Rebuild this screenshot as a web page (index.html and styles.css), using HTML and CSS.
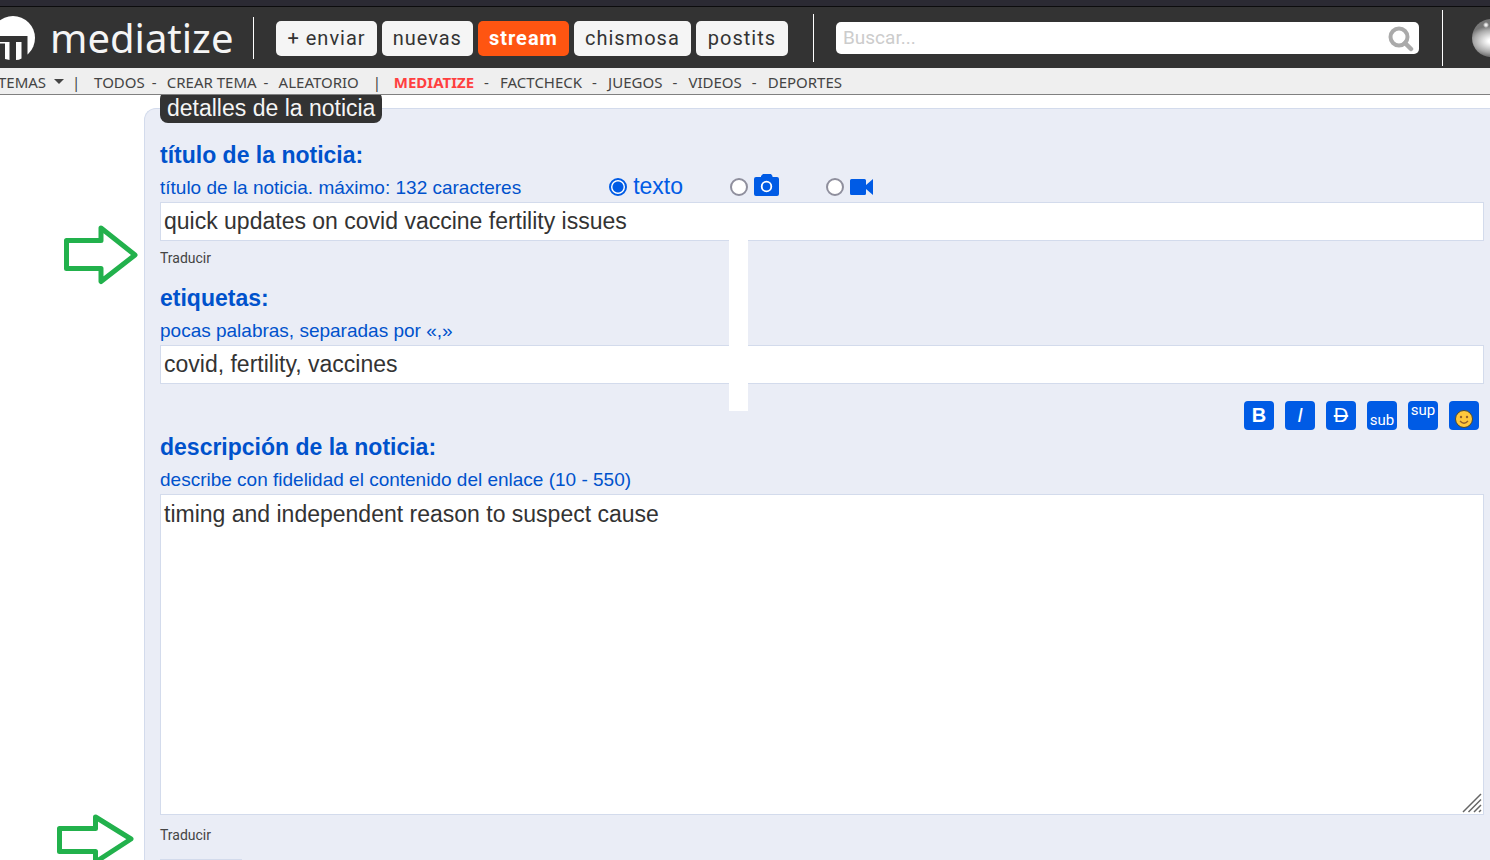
FILE: index.html
```html
<!DOCTYPE html>
<html lang="es">
<head>
<meta charset="utf-8">
<title>mediatize</title>
<link rel="stylesheet" href="styles.css">
</head>
<body>
<header class="site-header">
  <div class="topbar">
    <a class="brand" href="#">
      <svg class="brand-logo" width="35" height="46" viewBox="0 0 35 46" aria-hidden="true">
        <circle cx="13" cy="22" r="22" fill="#fff"/>
        <path d="M0 20H27.500V46H0z" fill="#333"/>
        <path d="M0 26H9.500V44L5 43V27.500H0zM16 26H21.500V42.500Q19 44 16 44z" fill="#fff"/>
      </svg>
      <span class="brand-name">mediatize</span>
    </a>
    <nav class="main-nav">
      <a class="tab" href="#">+ enviar</a>
      <a class="tab" href="#">nuevas</a>
      <a class="tab tab-active" href="#">stream</a>
      <a class="tab" href="#">chismosa</a>
      <a class="tab" href="#">postits</a>
    </nav>
    <form class="search">
      <input class="search-input" type="search" placeholder="Buscar..." aria-label="Buscar">
      <button class="search-button" type="button" aria-label="Buscar">
        <svg width="26" height="26" viewBox="0 0 26 26" fill="none" stroke="#aaa"><circle cx="11" cy="11" r="8.500" stroke-width="4"/><path d="M17 17L23 23" stroke-width="4.500" stroke-linecap="round"/></svg>
      </button>
    </form>
    <a class="profile" href="#" aria-label="Perfil"><span class="avatar"></span></a>
  </div>
  <nav class="topics">
    <a class="temas" href="#">TEMAS</a><span class="caret"></span><span class="bar">|</span>
    <a href="#">TODOS</a><span class="dash">-</span>
    <a href="#">CREAR TEMA</a><span class="dash">-</span>
    <a href="#">ALEATORIO</a><span class="bar">|</span>
    <a class="current" href="#">MEDIATIZE</a><span class="dash">-</span>
    <a href="#">FACTCHECK</a><span class="dash">-</span>
    <a href="#">JUEGOS</a><span class="dash">-</span>
    <a href="#">VIDEOS</a><span class="dash">-</span>
    <a href="#">DEPORTES</a>
  </nav>
</header>
<main class="page">
  <form class="panel">
    <h1 class="legend">detalles de la noticia</h1>
    <section class="field">
      <label class="title" for="titulo">título de la noticia:</label>
      <div class="hint-row">
        <p class="hint">título de la noticia. máximo: 132 caracteres</p>
        <div class="kinds">
          <label class="kind"><input class="radio" type="radio" name="kind" checked><span>texto</span></label>
          <label class="kind"><input class="radio" type="radio" name="kind" aria-label="imagen">
            <svg class="camera" width="25" height="22" viewBox="0 0 25 22" aria-hidden="true"><path d="M2 3H7V2L9 0H17L18.500 2V3H23Q25 3 25 5V20Q25 22 23 22H2Q0 22 0 20V5Q0 3 2 3z" fill="#005be5"/><circle cx="12.500" cy="12.500" r="4.800" fill="none" stroke="#fff" stroke-width="1.800"/></svg>
          </label>
          <label class="kind"><input class="radio" type="radio" name="kind" aria-label="video">
            <svg width="23" height="16" viewBox="0 0 23 16" aria-hidden="true"><path d="M1.500 0H14.500Q16 0 16 1.500V6L23 0V16L16 10V14.500Q16 16 14.500 16H1.500Q0 16 0 14.500V1.500Q0 0 1.500 0z" fill="#005be5"/></svg>
          </label>
        </div>
      </div>
      <input class="text" id="titulo" type="text" value="quick updates on covid vaccine fertility issues">
      <a class="translate" href="#">Traducir</a>
      <svg class="arrow arrow-top" width="74" height="60" viewBox="0 0 74 60" aria-hidden="true"><path d="M2.500 15.500H37V3L71 30L37 56.500V43.500H2.500z"/></svg>
    </section>
    <section class="field tags">
      <label class="title" for="etiquetas">etiquetas:</label>
      <p class="hint">pocas palabras, separadas por «,»</p>
      <input class="text" id="etiquetas" type="text" value="covid, fertility, vaccines">
      <span class="cover"></span>
    </section>
    <section class="field">
      <div class="tools">
        <button class="tool" type="button"><b>B</b></button>
        <button class="tool" type="button"><i>I</i></button>
        <button class="tool" type="button"><s>D</s></button>
        <button class="tool tool-sub" type="button">sub</button>
        <button class="tool tool-sup" type="button">sup</button>
        <button class="tool tool-face" type="button" aria-label="emoji">
          <svg width="18" height="18" viewBox="0 0 18 18"><circle cx="9" cy="9" r="8.500" fill="#ffc83d" stroke="#4e4930"/><circle cx="6" cy="7" r="1.200" fill="#96602a"/><circle cx="12" cy="7" r="1.200" fill="#96602a"/><path d="M5 11Q9 15.500 13 11" fill="none" stroke="#96602a" stroke-width="1.300"/></svg>
        </button>
      </div>
      <label class="title" for="descripcion">descripción de la noticia:</label>
      <p class="hint">describe con fidelidad el contenido del enlace (10 - 550)</p>
      <div class="area-wrap">
        <textarea class="area" id="descripcion">timing and independent reason to suspect cause</textarea>
        <svg class="grip" width="20" height="20" viewBox="0 0 20 20" aria-hidden="true"><path d="M1 19L19 1M6.500 19L19 6.500M12 19L19 12M17 19L19 17" stroke="#666" stroke-width="1.500"/></svg>
      </div>
      <a class="translate" href="#">Traducir</a>
      <svg class="arrow arrow-bottom" width="78" height="52" viewBox="0 0 78 52" aria-hidden="true"><path d="M2.500 14.500H38.500V3L74 25L38.500 48V37.500H2.500z"/></svg>
    </section>
    <div class="next"></div>
  </form>
</main>
</body>
</html>
```

FILE: styles.css
```css
* { box-sizing: border-box; }
body {
  margin: 0;
  height: 100vh;
  overflow: hidden;
  background: #fff;
  color: #333;
  font-family: "Liberation Sans", Arial, sans-serif;
}
a { color: inherit; text-decoration: none; }
p, h1 { margin: 0; }

.site-header { position: relative; z-index: 2; }
.topbar {
  display: flex;
  align-items: center;
  height: 68px;
  padding-top: 7px;
  background: linear-gradient(#2b2a33 6px, #0c0c0d 6px 7px, #333 7px);
}
.brand {
  display: flex;
  align-items: center;
  gap: 15px;
  height: 42px;
  padding-right: 20px;
  border-right: 1px solid #fff;
  color: #f5f5f5;
}
.brand-logo { margin-top: 2px; }
.brand-name { font: 40px/42px "Noto Sans", sans-serif; }
.main-nav {
  display: flex;
  align-items: center;
  gap: 5px;
  height: 48px;
  padding: 2px 25px 0 22px;
  border-right: 1px solid #fff;
}
.tab {
  padding: 0 11px;
  border-radius: 5px;
  background: #f5f5f5;
  font: 20px/35px Roboto, sans-serif;
  letter-spacing: 1px;
}
.tab:last-child { padding: 0 12px; }
.tab-active { background: #ff5511; color: #fff; font-weight: 700; }
.search { display: flex; flex: 1; position: relative; margin: 0 23px 0 22px; }
.search-input {
  flex: 1;
  min-width: 0;
  height: 32px;
  padding: 0 40px 0 7px;
  border: 0;
  border-radius: 5px;
  background: #fff;
  font: 19px Roboto, sans-serif;
}
.search-input::placeholder { color: #ccc; }
.search-button {
  position: absolute;
  top: 4px;
  right: 5px;
  width: 26px;
  height: 26px;
  padding: 0;
  border: 0;
  background: none;
}
.profile {
  display: flex;
  align-items: center;
  width: 48px;
  height: 56px;
  padding-left: 29px;
  border-left: 1px solid #fff;
  overflow: hidden;
}
.avatar {
  flex: none;
  width: 38px;
  height: 38px;
  border-radius: 50%;
  background: radial-gradient(circle at 14px 6px, #eee 0 1px, transparent 3px), radial-gradient(ellipse 24px 15px at 20px 22px, #fff 15%, #aaa 75%, #777);
}
.topics {
  display: flex;
  align-items: center;
  height: 27px;
  padding-top: 1px;
  border-bottom: 1px solid #808080;
  background: #efefef;
  color: #444;
  font: 15px/24px "Noto Sans", sans-serif;
}
.temas { margin-left: -2px; }
.caret {
  margin: 0 8px;
  border: 5px solid transparent;
  border-top-color: #444;
  border-bottom: 0;
}
.bar { width: 22px; }
.topics a + .bar { width: 21px; margin-left: 14px; }
.dash { width: 22px; padding-left: 7px; }
.current { color: #ff3f3f; font-weight: 700; }
.current ~ .dash { width: 26px; padding-left: 10px; }

.page { padding: 13px 0 0 144px; }
.panel {
  padding: 0 6px 0 15px;
  border: 1px solid #d3dbec;
  border-right: 0;
  border-radius: 12px 0 0 0;
  background: #eaedf6;
}
.legend {
  width: max-content;
  margin-top: -18px;
  padding: 3px 7px 1px;
  border-radius: 8px;
  background: #333;
  color: #f5f5f5;
  font-size: 23px;
  font-weight: 400;
  line-height: 28px;
}
.field { position: relative; display: flex; flex-direction: column; align-items: stretch; padding-top: 16px; }
.title { color: #0052cc; font-size: 23px; font-weight: 700; line-height: 32px; }
.hint-row { display: flex; align-items: center; }
.hint { padding-top: 2px; color: #0052cc; font-size: 19px; line-height: 29px; }
.kinds { display: flex; gap: 47px; margin-left: 88px; }
.kind { display: flex; align-items: center; gap: 6px; height: 30px; color: #005be5; font-size: 23px; }
.camera { margin-bottom: 3px; }
.radio {
  appearance: none;
  width: 18px;
  height: 18px;
  margin: 0;
  border: 2px solid #8f8f9d;
  border-radius: 50%;
  background: #fff;
}
.radio:checked { border-color: #005be5; background: radial-gradient(circle, #005be5 5px, #fff 6px); }
.text, .area {
  width: 100%;
  border: 1px solid #d3dbec;
  border-radius: 0;
  background: #fff;
  color: #333;
  font: 23px/27px "Liberation Sans", Arial, sans-serif;
}
.text { height: 39px; padding: 0 3px; }
.translate { margin-top: 7px; color: #444; font: 14px/20px Roboto, sans-serif; }
.tags { padding-top: 14px; }
.cover { position: absolute; top: -28px; bottom: -27px; left: 569px; width: 19px; background: #fff; }
.tools { display: flex; justify-content: flex-end; gap: 11px; padding-right: 5px; margin: 1px 0; z-index: 1; }
.tool {
  width: 30px;
  height: 29px;
  padding: 0;
  border: 0;
  border-radius: 4px;
  background: #005be5;
  color: #fff;
  font: 20px/29px "Liberation Sans", Arial, sans-serif;
}
.tool-sub { padding-top: 10px; font: 15px/19px Roboto, sans-serif; }
.tool-sup { padding-bottom: 10px; font: 15px/19px Roboto, sans-serif; }
.tool-face { display: flex; align-items: flex-end; justify-content: center; padding-bottom: 2px; }
.area-wrap { position: relative; display: flex; }
.area { height: 321px; padding: 6px 3px; resize: none; }
.grip { position: absolute; right: 2px; bottom: 2px; }
.area-wrap + .translate { margin-top: 10px; }
.arrow { position: absolute; fill: none; stroke: #22b14c; stroke-width: 5px; stroke-linejoin: round; }
.arrow-top { left: -96px; bottom: -17px; }
.arrow-bottom { left: -103px; bottom: -21px; }
.next { width: 82px; height: 30px; margin-top: 14px; border-top: 1px solid #d3dbec; }
```
